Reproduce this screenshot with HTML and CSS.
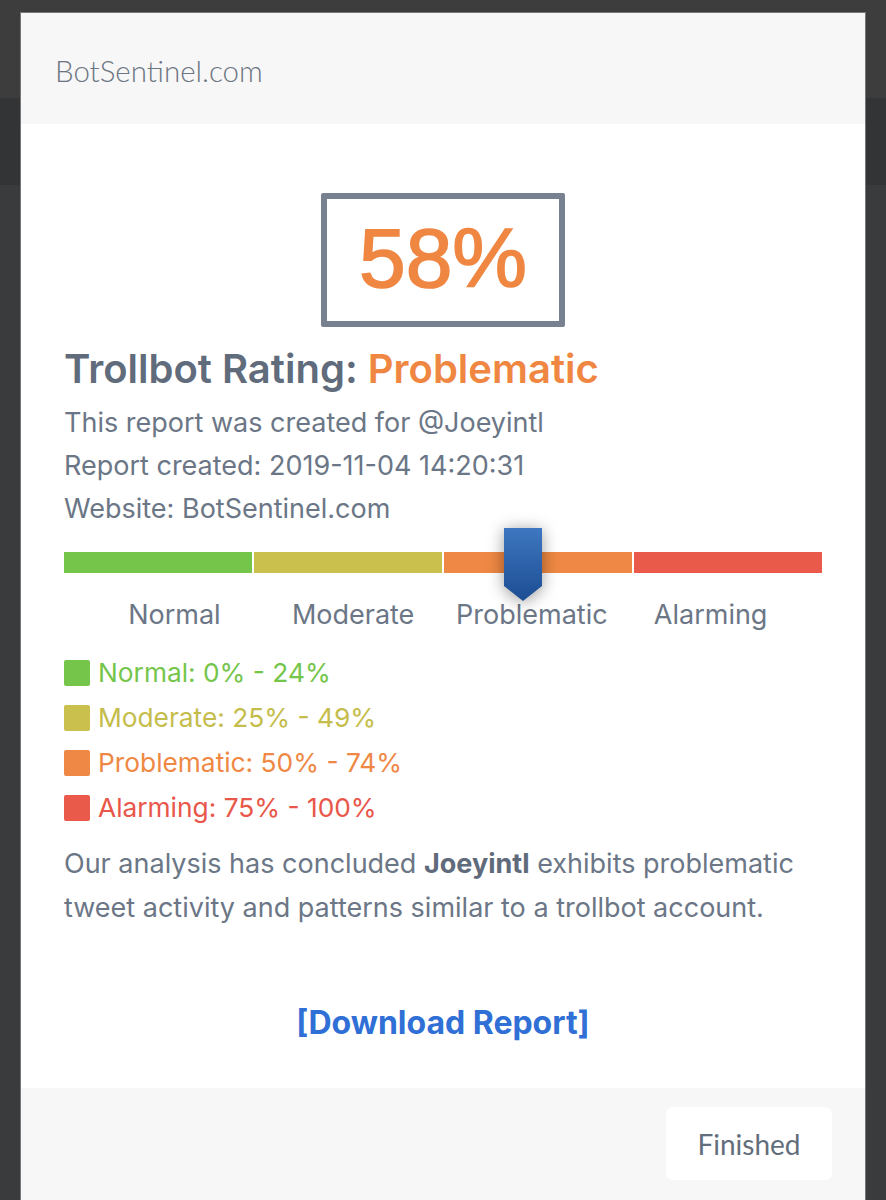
FILE: index.html
```html
<!DOCTYPE html>
<html>
<head>
<meta charset="utf-8">
<link rel="stylesheet" href="styles.css">
</head>
<body>
<div class="modal">
  <div class="modal-header">BotSentinel.com</div>
  <div class="modal-body">
    <div class="score-wrap"><div class="score">58%</div></div>
    <h2 class="rating">Trollbot Rating: <span class="orange">Problematic</span></h2>
    <p class="meta">This report was created for @Joeyintl</p>
    <p class="meta">Report created: 2019-11-04 14:20:31</p>
    <p class="meta">Website: BotSentinel.com</p>
    <div class="meter">
      <div class="bar">
        <div class="seg green"></div>
        <div class="seg yellow"></div>
        <div class="seg orange-bg"></div>
        <div class="seg red"></div>
      </div>
      <svg class="marker" style="left: 58%" width="38" height="73" viewBox="0 0 38 73">
        <defs>
          <linearGradient id="mg" x1="0" y1="0" x2="0" y2="1">
            <stop offset="0" stop-color="#3e77c0"/>
            <stop offset="1" stop-color="#1c4d93"/>
          </linearGradient>
        </defs>
        <path d="M0 0 H38 V58 L19 73 L0 58 Z" fill="url(#mg)"/>
      </svg>
    </div>
    <div class="labels">
      <span>Normal</span><span>Moderate</span><span>Problematic</span><span>Alarming</span>
    </div>
    <ul class="legend">
      <li class="l-green"><i></i>Normal: 0% - 24%</li>
      <li class="l-yellow"><i></i>Moderate: 25% - 49%</li>
      <li class="l-orange"><i></i>Problematic: 50% - 74%</li>
      <li class="l-red"><i></i>Alarming: 75% - 100%</li>
    </ul>
    <p class="summary">Our analysis has concluded <b>Joeyintl</b> exhibits problematic tweet activity and patterns similar to a trollbot account.</p>
    <div class="download"><a href="#">[Download Report]</a></div>
  </div>
  <div class="modal-footer">
    <button class="finish">Finished</button>
  </div>
</div>
</body>
</html>
```
FILE: styles.css
```css
html, body {
  margin: 0;
  padding: 0;
}
body {
  width: 886px;
  height: 1200px;
  overflow: hidden;
  background: linear-gradient(#3d3d3e 0, #3d3d3e 98px, #333436 98px, #333436 185px, #3a3b3d 185px);
  font-family: Inter, Roboto, "Liberation Sans", sans-serif;
  color: #6b7686;
}
.modal {
  margin: 13px 21px 0 21px;
  width: 844px;
  background: #fff;
  box-shadow: 0 0 0 1px #777;
}
.modal-header {
  height: 111px;
  box-sizing: border-box;
  background: #f7f7f7;
  padding: 40px 0 0 34px;
  font-family: Lato, sans-serif;
  font-weight: 300;
  font-size: 29.5px;
  line-height: 36px;
  color: #6c7581;
}
.modal-body {
  padding: 69px 43px 0 43px;
  height: 964px;
  box-sizing: border-box;
}
.score-wrap {
  display: flex;
  justify-content: center;
}
.score {
  width: 244px;
  height: 134px;
  box-sizing: border-box;
  border: 6px solid #78818f;
  border-radius: 2px;
  display: flex;
  align-items: center;
  justify-content: center;
  font-family: "Liberation Sans", Arial, sans-serif;
  font-size: 84px;
  color: #ef8742;
  -webkit-text-stroke: 1.6px #ef8742;
  padding-bottom: 4px;
}
.rating {
  margin: 18px 0 0 0;
  font-size: 40px;
  line-height: 48px;
  font-weight: 600;
  color: #606b7b;
}
.orange { color: #ef8742; }
.meta {
  margin: 0;
  font-size: 27px;
  line-height: 43px;
}
.meta:first-of-type { margin-top: 8px; }
.meter {
  position: relative;
  margin-top: 0;
  padding-top: 22px;
}
.bar {
  display: flex;
  gap: 2px;
  height: 21px;
}
.seg { flex: 1; }
.green { background: #76c54b; }
.yellow { background: #c9c04d; }
.orange-bg { background: #ee8844; }
.red { background: #ea5a4a; }
.marker {
  position: absolute;
  top: -2px;
  filter: drop-shadow(0 2px 8px rgba(0,0,0,0.4));
}
.labels {
  display: grid;
  grid-template-columns: repeat(4, 1fr);
  padding: 0 22px 0 21px;
  margin-top: 22px;
  font-size: 27px;
  line-height: 40px;
  text-align: center;
}
.legend {
  list-style: none;
  margin: 15px 0 0 0;
  padding: 0;
}
.legend li {
  display: flex;
  align-items: center;
  gap: 8px;
  height: 45px;
  font-size: 26.3px;
}
.legend i {
  width: 26px;
  height: 26px;
  border-radius: 2px;
}
.l-green { color: #76c54b; }
.l-green i { background: #76c54b; }
.l-yellow { color: #c5bd4b; }
.l-yellow i { background: #c9c04d; }
.l-orange { color: #ee8844; }
.l-orange i { background: #ee8844; }
.l-red { color: #e9564a; }
.l-red i { background: #ea5a4a; }
.summary {
  margin: 12px 0 0 0;
  font-size: 27px;
  line-height: 44px;
}
.summary b { font-weight: 700; color: #5f6a7a; }
.download {
  margin-top: 73px;
  text-align: center;
}
.download a {
  font-size: 32px;
  font-weight: 700;
  color: #2f6fd6;
  text-decoration: none;
}
.modal-footer {
  background: #f7f7f7;
  height: 112px;
  display: flex;
  justify-content: flex-end;
  align-items: flex-start;
  padding: 19px 33px 0 0;
  box-sizing: border-box;
}
.finish {
  width: 166px;
  height: 73px;
  border: none;
  border-radius: 7px;
  background: #fff;
  font-family: Lato, sans-serif;
  font-size: 28px;
  color: #636e7c;
}
```
